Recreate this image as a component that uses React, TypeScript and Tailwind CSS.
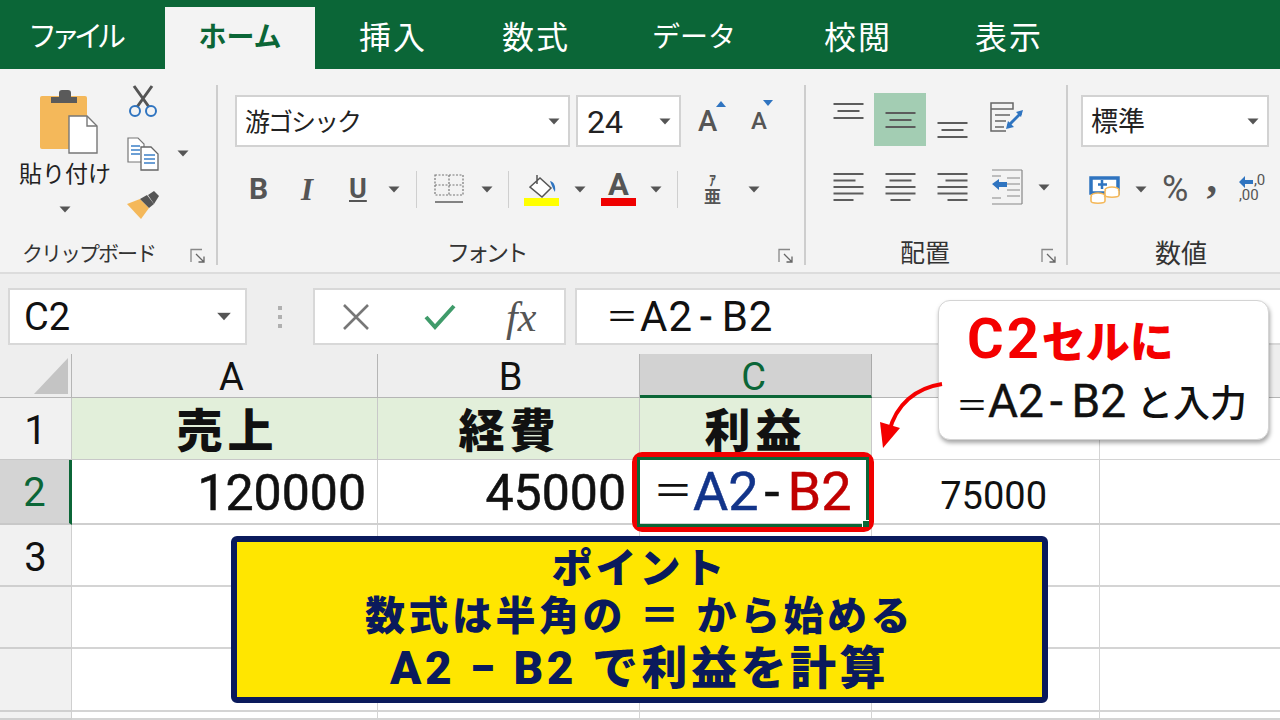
import React from 'react';

const Caret = ({ className = '' }: { className?: string }) => (
    <svg width="12" height="7" viewBox="0 0 12 7" className={`shrink-0 ${className}`}>
        <path d="M0.5 0.5h11L6 6.5z" fill="#555" />
    </svg>
);

const Launcher = ({ className = '' }: { className?: string }) => (
    <svg width="16" height="16" viewBox="0 0 16 16" className={`mt-[4px] shrink-0 ${className}`} fill="none" stroke="#666" strokeWidth="1.3">
        <path d="M1 14V1.5h11" stroke="#888" />
        <path d="M6 6l8 8M14 8.5V14H8.5" />
    </svg>
);

const Lines = ({ widths, align = 'left', gap = 6.5 }: { widths: number[]; align?: string; gap?: number }) => (
    <svg width="31" height={(widths.length - 1) * gap + 2} viewBox={`0 0 31 ${(widths.length - 1) * gap + 2}`} className="shrink-0">
        {widths.map((w, i) => {
            const x = align === 'left' ? 0.5 : align === 'right' ? 30.5 - w : 15.5 - w / 2;
            return <rect key={i} x={x} y={i * gap} width={w} height="2" fill="#5c5c5c" />;
        })}
    </svg>
);

const Sep = ({ className = '' }: { className?: string }) => <div className={`h-[37px] w-px shrink-0 bg-[#cfcfcf] ${className}`} />;

const GroupDivider = () => <div className="mt-[16px] h-[180px] w-[2px] shrink-0 bg-[#cdcdcd]" />;

const GroupFooter = ({ label, labelClass, launcherClass }: { label: string; labelClass: string; launcherClass?: string }) => (
    <div className="mb-[2px] mt-auto flex h-[32px] items-center whitespace-nowrap">
        <div className={`leading-[32px] text-[#333] ${labelClass}`}>{label}</div>
        {launcherClass !== undefined && <Launcher className={launcherClass} />}
    </div>
);

const Combo = ({ text, className, textClass }: { text: string; className: string; textClass: string }) => (
    <div className={`flex h-[52px] items-center justify-between border-2 border-[#d2d2d2] bg-white pr-[8px] ${className}`}>
        <span className={`text-[#222] ${textClass}`}>{text}</span>
        <Caret />
    </div>
);

const tabs = [
    { label: 'ファイル', cls: 'ml-[28px] w-[96px] pt-[6px] text-[29px] tracking-[-6px] text-white' },
    { label: 'ホーム', cls: 'ml-[41px] h-[62px] w-[150px] self-end justify-center bg-[#f3f3f3] text-[28px] font-bold text-[#0b6637]' },
    { label: '挿入', cls: 'ml-[44px] w-[68px] pt-[6px] text-[32px] tracking-[2px] text-white' },
    { label: '数式', cls: 'ml-[75px] w-[68px] pt-[6px] text-[32px] tracking-[2px] text-white' },
    { label: 'データ', cls: 'ml-[82px] w-[84px] pt-[6px] text-[28px] text-white' },
    { label: '校閲', cls: 'ml-[88px] w-[68px] pt-[6px] text-[32px] tracking-[2px] text-white' },
    { label: '表示', cls: 'ml-[83px] w-[68px] pt-[6px] text-[32px] tracking-[2px] text-white' },
];

const ClipboardGroup = () => (
    <div className="flex h-full w-[216px] shrink-0 flex-col">
        <div className="flex pl-[19px] pt-[19px]">
            <div className="flex w-[92px] flex-col items-center">
                <svg width="60" height="66" viewBox="0 0 60 66" className="ml-[7px]">
                    <rect x="1" y="8" width="47" height="53" rx="2" fill="#f4b85a" />
                    <path d="M12 15v-6h8v-4a3 3 0 0 1 3-3h6a3 3 0 0 1 3 3v4h6v6z" fill="#5a5a5a" />
                    <path d="M30 28h18l10 10v27H30z" fill="#fff" stroke="#777" strokeWidth="1.4" />
                    <path d="M48 28v10h10" fill="none" stroke="#777" strokeWidth="1.4" />
                </svg>
                <div className="mt-[7px] whitespace-nowrap text-[23px] leading-[28px] text-[#222]">貼り付け</div>
                <Caret className="mt-[17px]" />
            </div>
            <div className="-mt-[3px] ml-[16px] flex w-[34px] flex-col items-center">
                <svg width="30" height="33" viewBox="0 0 30 33" fill="none" className="-ml-[3px]">
                    <path d="M6 1l15 21M24 1L9 22" stroke="#555" strokeWidth="3" />
                    <circle cx="7" cy="26" r="5" stroke="#2f74c0" strokeWidth="2" />
                    <circle cx="23" cy="26" r="5" stroke="#2f74c0" strokeWidth="2" />
                </svg>
                <svg width="32" height="34" viewBox="0 0 32 34" className="-ml-[3px] mt-[19px]" fill="none">
                    <path d="M1 1h10l6 6v18H1z" fill="#fff" stroke="#777" strokeWidth="1.2" />
                    <path d="M4 9h9M4 13h9M4 17h9" stroke="#3d80c8" strokeWidth="1.5" />
                    <path d="M14 10h10l7 7v16H14z" fill="#fff" stroke="#666" strokeWidth="1.3" />
                    <path d="M17 18h11M17 22h11M17 26h11" stroke="#3d80c8" strokeWidth="1.5" />
                </svg>
                <svg width="34" height="29" viewBox="0 0 34 29" className="-ml-[3px] mt-[19px]">
                    <path d="M1 14l13-5 9 9-8 11z" fill="#f4b85a" />
                    <path d="M14 9l7-4 7 9-5 4z" fill="#555" />
                    <path d="M22 5l6-4 5 5-5 8z" fill="#555" />
                </svg>
            </div>
            <Caret className="ml-[16px] mt-[62px]" />
        </div>
        <GroupFooter label="クリップボード" labelClass="ml-[22px] w-[168px] text-[21px] tracking-[-2px]" launcherClass="" />
    </div>
);

const FontGroup = () => (
    <div className="flex h-full w-[586px] shrink-0 flex-col">
        <div className="flex items-center pl-[17px] pt-[26px]">
            <Combo text="游ゴシック" className="w-[335px] pl-[8px]" textClass="pt-[3px] text-[25px] tracking-[-2px]" />
            <Combo text="24" className="ml-[6px] w-[105px] pl-[9px]" textClass="pt-[1px] text-[32px]" />
            <div className="relative ml-[17px] h-[30px] w-[26px]">
                <span className="absolute bottom-0 left-0 text-[29px] font-medium leading-[29px] text-[#555]">A</span>
                <svg width="10" height="6" className="absolute -top-[5px] left-[18px]"><path d="M0 6h10L5 0z" fill="#2f74c0" /></svg>
            </div>
            <div className="relative ml-[27px] h-[24px] w-[20px]">
                <span className="absolute bottom-0 left-0 text-[24px] font-medium leading-[23px] text-[#555]">A</span>
                <svg width="10" height="6" className="absolute -top-[9px] left-[12px]"><path d="M0 0h10L5 6z" fill="#2f74c0" /></svg>
            </div>
        </div>
        <div className="mt-[22px] flex h-[40px] items-center pl-[31px] text-[#555]">
            <span className="w-[52px] text-[30px] font-bold leading-none">B</span>
            <span className="w-[48px] font-['Liberation_Serif',serif] text-[31px] font-bold italic leading-none">I</span>
            <span className="w-[38px] text-[27px] font-bold leading-none underline decoration-2 underline-offset-2">U</span>
            <Caret className="ml-[1px]" />
            <Sep className="ml-[16px]" />
            <svg width="30" height="30" viewBox="0 0 30 30" className="ml-[17px] shrink-0" fill="none">
                <path d="M1 1h28v20H1zM15 1v20M1 11h28" stroke="#777" strokeWidth="1.2" strokeDasharray="2 1.5" />
                <path d="M1 28h28" stroke="#666" strokeWidth="1.6" />
            </svg>
            <Caret className="ml-[17px]" />
            <Sep className="ml-[15px]" />
            <div className="relative ml-[15px] h-[33px] w-[35px] shrink-0">
                <svg width="30" height="26" viewBox="0 0 30 26" className="absolute left-[5px] top-0" fill="none">
                    <path d="M8 2v9M1 14L11 5l11 10-9 9z" stroke="#555" strokeWidth="1.5" fill="#fff" />
                    <path d="M21 8c4 1 6 5 5 11-2-3-3-6-5-11z" fill="#2f74c0" />
                </svg>
                <div className="absolute bottom-0 left-0 h-[8px] w-[35px] bg-[#ffff00]" />
            </div>
            <Caret className="ml-[15px]" />
            <div className="relative ml-[15px] h-[33px] w-[35px] shrink-0">
                <span className="absolute -top-[4px] left-[7px] text-[31px] font-bold leading-[31px] text-[#555]">A</span>
                <div className="absolute bottom-0 left-0 h-[8px] w-[35px] bg-[#ef0000]" />
            </div>
            <Caret className="ml-[14px]" />
            <Sep className="ml-[15px]" />
            <div className="ml-[26px] flex w-[17px] shrink-0 flex-col items-center text-[#555]">
                <span className="text-[14px] font-bold leading-[15px]">ｱ</span>
                <span className="text-[17px] font-bold leading-[18px]">亜</span>
            </div>
            <Caret className="ml-[27px]" />
        </div>
        <GroupFooter label="フォント" labelClass="ml-[229px] w-[331px] text-[23px] tracking-[-3.5px]" launcherClass="" />
    </div>
);

const AlignGroup = () => (
    <div className="flex h-full w-[260px] shrink-0 flex-col">
        <div className="flex h-[77px] pl-[27px] pt-[24px]">
            <div className="flex h-[53px] items-start pt-[10px]">
                <Lines widths={[30, 22, 30]} align="center" gap={7} />
            </div>
            <div className="ml-[10px] flex h-[53px] w-[52px] items-center justify-center bg-[#a3cdb3]">
                <Lines widths={[30, 22, 30]} align="center" gap={7} />
            </div>
            <div className="ml-[11px] flex h-[53px] items-start pt-[29px]">
                <Lines widths={[30, 22, 30]} align="center" gap={7} />
            </div>
            <svg width="34" height="32" viewBox="0 0 34 32" className="ml-[22px] mt-[9px] shrink-0" fill="none">
                <path d="M1 1h22v6H1zM1 7v22h15M5 13h15M5 19h11M5 25h9" stroke="#666" strokeWidth="1.5" />
                <path d="M18 24l13-13" stroke="#2f74c0" strokeWidth="3" />
                <path d="M16 27l2-8 6 6zM33 8l-2 7-5-5z" fill="#2f74c0" />
            </svg>
        </div>
        <div className="mt-[21px] flex h-[40px] items-center pl-[27px]">
            <Lines widths={[30, 22, 30, 30, 20]} />
            <div className="ml-[21px]"><Lines widths={[30, 22, 30, 30, 20]} align="center" /></div>
            <div className="ml-[21px]"><Lines widths={[30, 22, 30, 30, 20]} align="right" /></div>
            <svg width="32" height="36" viewBox="0 0 32 36" className="ml-[23px] shrink-0" fill="none">
                <path d="M1 1h30M31 1v34M1 35h30M16 9h13M16 15h13M16 21h13M16 27h13M1 7h9M1 29h9" stroke="#888" strokeWidth="1.2" />
                <path d="M1 15l7-5v3h8v5H8v3z" fill="#2f74c0" />
            </svg>
            <Caret className="ml-[15px]" />
        </div>
        <GroupFooter label="配置" labelClass="ml-[94px] w-[141px] text-[25px]" launcherClass="" />
    </div>
);

const NumberGroup = () => (
    <div className="flex h-full flex-1 flex-col">
        <div className="pl-[13px] pt-[26px]">
            <Combo text="標準" className="w-[188px] pl-[8px]" textClass="pt-[3px] text-[27px]" />
        </div>
        <div className="mt-[22px] flex h-[40px] items-center pl-[20px]">
            <svg width="32" height="32" viewBox="0 0 32 32" fill="none" className="shrink-0">
                <path d="M3 5h27v15H3z" fill="#fff" stroke="#2f74c0" strokeWidth="3.5" />
                <path d="M14 7v9M10 11.500h9" stroke="#2f74c0" strokeWidth="2.5" />
                <ellipse cx="24" cy="17" rx="7" ry="3" fill="#fff" stroke="#f4b85a" strokeWidth="1.6" />
                <path d="M17 18v4c0 3 14 3 14 0v-4" fill="#fff" stroke="#f4b85a" strokeWidth="1.6" />
                <ellipse cx="10" cy="23" rx="7" ry="3" fill="#fff" stroke="#f4b85a" strokeWidth="1.6" />
                <path d="M3 24v4c0 3 14 3 14 0v-4" fill="#fff" stroke="#f4b85a" strokeWidth="1.6" />
            </svg>
            <Caret className="ml-[15px]" />
            <span className="ml-[15px] text-[36px] leading-none text-[#555]">%</span>
            <span className="-mt-[22px] ml-[18px] font-['Liberation_Serif',serif] text-[42px] font-bold leading-none text-[#555]">,</span>
            <div className="relative ml-[22px] h-[32px] w-[32px] shrink-0 text-[15px] leading-[15px] text-[#555]">
                <span className="absolute left-[15px] top-0">,0</span>
                <span className="absolute left-0 top-[15px]">,00</span>
                <svg width="14" height="12" viewBox="0 0 14 12" className="absolute left-0 top-[3px]"><path d="M0 6l6-6v4h8v4H6v4z" fill="#2f74c0" /></svg>
            </div>
        </div>
        <GroupFooter label="数値" labelClass="ml-[87px] text-[26px]" />
    </div>
);

const FormulaBar = () => (
    <div className="flex h-[82px] items-start border-t-2 border-[#dcdcdc] bg-[#eeeeee] pl-[8px] pt-[14px]">
        <div className="flex h-[57px] w-[239px] items-center justify-between border-2 border-[#d8d8d8] bg-white pl-[14px] pr-[15px]">
            <span className="text-[38px] leading-none text-[#111]">C2</span>
            <Caret className="scale-125" />
        </div>
        <div className="ml-[31px] mt-[18px] flex h-[22px] w-[5px] flex-col justify-between">
            <i className="block h-[4px] w-[4px] bg-[#b0b0b0]" />
            <i className="block h-[4px] w-[4px] bg-[#b0b0b0]" />
            <i className="block h-[4px] w-[4px] bg-[#b0b0b0]" />
        </div>
        <div className="ml-[30px] flex h-[57px] w-[253px] items-center border-2 border-[#d8d8d8] bg-white pl-[27px]">
            <svg width="28" height="28" viewBox="0 0 28 28" fill="none" className="shrink-0">
                <path d="M2 2l24 24M26 2L2 26" stroke="#777" strokeWidth="2.6" />
            </svg>
            <svg width="32" height="26" viewBox="0 0 32 26" className="ml-[54px] shrink-0" fill="none">
                <path d="M2 13l9 10L30 2" stroke="#3f9b6a" strokeWidth="4" />
            </svg>
            <span className="ml-[50px] font-['Liberation_Serif',serif] text-[42px] italic leading-none text-[#555]">fx</span>
        </div>
        <div className="ml-[9px] flex h-[57px] flex-1 items-center whitespace-nowrap border-2 border-r-0 border-[#d8d8d8] bg-white pl-[29px] text-[42px] text-[#111]">
            <span className="text-[32px]">＝</span>
            <span className="ml-[2px] tracking-[1px]">A2</span>
            <span className="mx-[7px] tracking-[3px] [-webkit-text-stroke:0.6px_#111]">-</span>
            <span className="tracking-[1px]">B2</span>
        </div>
    </div>
);

const headCell = 'border-b border-r border-[#b5b5b5] bg-[#eeeeee] text-center text-[38px] leading-[46px] text-[#111]';
const rowHead = 'border-b border-r border-[#c8c8c8] bg-[#f1f1f1] text-center text-[40px] text-[#111]';
const titleCell = 'border-b border-r border-[#c8c8c8] bg-[#e2efda] pt-[1px] text-center text-[46px] font-black leading-[64px] tracking-[5px] text-[#111]';
const valueCell = 'border-b-2 border-r border-[#cfcfcf] text-right text-[50px] leading-[66px] text-[#111] [-webkit-text-stroke:0.6px_#111]';

const Sheet = () => (
    <div className="relative flex-1 bg-white">
        <div className="grid h-full grid-cols-[72px_306px_262px_232px_228px_180px] grid-rows-[44px_62px_65px_62px_62px_63px_8px]">
            {/* column headers */}
            <div className="relative border-b border-r border-[#b5b5b5] bg-[#eeeeee]">
                <div className="absolute bottom-[3px] right-[3px] h-0 w-0 border-b-[36px] border-l-[34px] border-b-[#c4c4c4] border-l-transparent" />
            </div>
            <div className={`${headCell} pl-[14px]`}>A</div>
            <div className={`${headCell} pl-[4px]`}>B</div>
            <div className="border-b-[3px] border-r border-b-[#0b6637] border-r-[#aaa] bg-[#d2d2d2] pr-[4px] text-center text-[38px] leading-[46px] text-[#0b6637]">C</div>
            <div className="border-b border-[#b5b5b5] bg-[#eeeeee]" />
            <div className="border-b border-[#b5b5b5] bg-[#eeeeee]" />
            {/* row 1 */}
            <div className={`${rowHead} leading-[66px]`}>1</div>
            <div className={`${titleCell} pl-[6px]`}>売上</div>
            <div className={`${titleCell} pl-[2px]`}>経費</div>
            <div className={titleCell}>利益</div>
            <div className="border-b border-r border-[#d4d4d4]" />
            <div className="border-b border-[#d4d4d4]" />
            {/* row 2 */}
            <div className="border-b-2 border-r-[3px] border-b-[#c8c8c8] border-r-[#0b6637] bg-[#d4d4d4] text-center text-[40px] leading-[66px] text-[#0b6637]">2</div>
            <div className={`${valueCell} pr-[11px]`}>120000</div>
            <div className={`${valueCell} pr-[13px]`}>45000</div>
            <div className="flex items-center whitespace-nowrap border-b-2 border-r border-[#cfcfcf] pl-[13px] text-[54px] leading-[62px]">
                <span className="text-[40px] text-[#111]">＝</span>
                <span className="text-[#12348a] [-webkit-text-stroke:0.5px_#12348a]">A2</span>
                <span className="mx-[6px] tracking-[2px] text-[#111] [-webkit-text-stroke:0.6px_#111]">-</span>
                <span className="text-[#c00000] [-webkit-text-stroke:0.5px_#c00000]">B2</span>
            </div>
            <div className="border-b-2 border-r border-[#cfcfcf] pr-[52px] text-right text-[38px] leading-[72px] text-[#111]">75000</div>
            <div className="border-b-2 border-[#cfcfcf]" />
            {/* row 3 - 6, empty */}
            {['3', '', '', ''].map((n, r) => (
                <React.Fragment key={r}>
                    <div className="border-b-2 border-r border-[#cfcfcf] bg-[#f1f1f1] text-center text-[40px] leading-[66px] text-[#111]">{n}</div>
                    {[0, 1, 2, 3].map((c) => (
                        <div key={c} className="border-b-2 border-r border-[#d4d4d4]" />
                    ))}
                    <div className="border-b-2 border-[#d4d4d4]" />
                </React.Fragment>
            ))}
        </div>

        {/* selected cell + red highlight */}
        <div className="absolute left-[632px] top-[98px] h-[80px] w-[242px] rounded-[10px] border-[6px] border-[#f00000]">
            <div className="relative -m-[1px] h-[70px] w-[232px] border-[3px] border-[#0b6637]">
                <div className="absolute -bottom-[3px] -right-[3px] h-[7px] w-[7px] border-l border-t border-white bg-[#0b6637]" />
            </div>
        </div>

        {/* callout */}
        <div className="absolute -top-[54px] left-[938px] h-[140px] w-[331px] rounded-[12px] border border-[#d4d4d4] bg-white shadow-[1px_3px_4px_rgba(0,0,0,0.35)]">
            <div className="flex items-baseline pl-[28px] pt-[8px] font-bold leading-[60px] text-[#f40000]">
                <span className="text-[56px] tracking-[3px]">C2</span>
                <span className="text-[44px] font-black tracking-[0px]">セルに</span>
            </div>
            <div className="mt-[5px] flex items-baseline whitespace-nowrap pl-[17px] leading-[46px] text-[#111]">
                <span className="text-[32px]">＝</span>
                <span className="text-[46px] [-webkit-text-stroke:0.4px_#111]">A2</span>
                <span className="mx-[6px] text-[46px] tracking-[3px] [-webkit-text-stroke:0.6px_#111]">-</span>
                <span className="text-[46px] [-webkit-text-stroke:0.4px_#111]">B2</span>
                <span className="ml-[10px] text-[37px] font-medium">と入力</span>
            </div>
        </div>
        <svg width="70" height="72" viewBox="0 0 70 72" className="absolute left-[878px] top-[26px]" fill="none">
            <path d="M64 4C38 8 18 24 11 52" stroke="#f40000" strokeWidth="4" />
            <path d="M2 42l20 6-17 20z" fill="#f40000" />
        </svg>

        {/* note */}
        <div className="absolute left-[231px] top-[182px] flex h-[167px] w-[817px] flex-col items-center rounded-[6px] border-[6px] border-[#0a1a5c] bg-[#ffe600] pt-[2px] font-black text-[#0a1a5c]">
            <div className="text-[41px] leading-[50px] tracking-[3px]">ポイント</div>
            <div className="whitespace-nowrap text-[40px] leading-[46px] tracking-[3.5px]">数式は半角の ＝ から始める</div>
            <div className="whitespace-nowrap text-[46px] leading-[56px] tracking-[3.5px]">A2 − B2 で利益を計算</div>
        </div>
    </div>
);

export default function App() {
    return (
        <div className="flex h-[720px] w-[1280px] flex-col overflow-hidden bg-white font-['Roboto','Noto_Sans_CJK_JP',sans-serif]">
            <div className="flex h-[69px] shrink-0 items-center whitespace-nowrap bg-[#0b6637]">
                {tabs.map((t) => (
                    <div key={t.label} className={`flex items-center ${t.cls}`}>
                        {t.label}
                    </div>
                ))}
            </div>
            <div className="flex h-[203px] shrink-0 bg-[#f3f3f3]">
                <ClipboardGroup />
                <GroupDivider />
                <FontGroup />
                <GroupDivider />
                <AlignGroup />
                <GroupDivider />
                <NumberGroup />
            </div>
            <FormulaBar />
            <Sheet />
        </div>
    );
}
